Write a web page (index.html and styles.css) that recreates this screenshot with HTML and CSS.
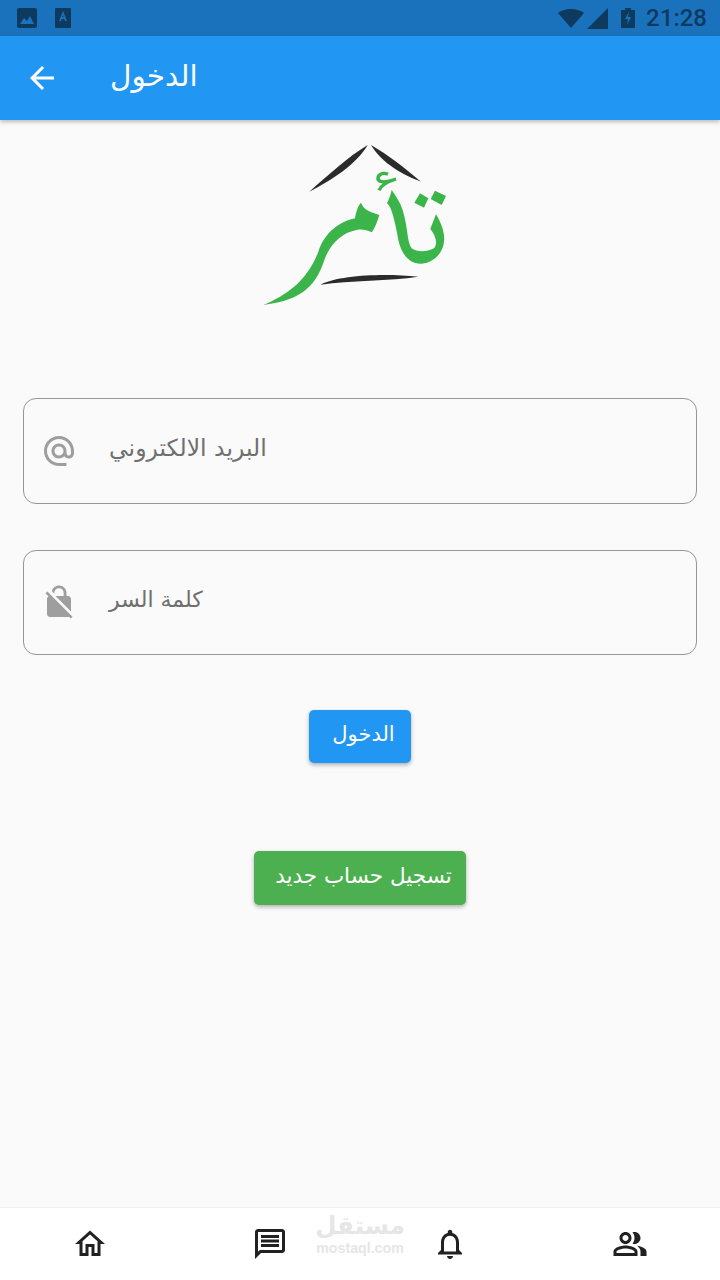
FILE: index.html
```html
<!DOCTYPE html>
<html lang="ar">

<head>
    <meta charset="UTF-8">
    <meta name="viewport" content="width=device-width, initial-scale=1.0">
    <title>الدخول</title>
    <link rel="stylesheet" href="styles.css">
</head>

<body>
    <div class="status-bar">
        <div class="status-left">
            <svg class="status-pic" viewBox="0 0 20 20">
                <rect width="20" height="20" rx="2" fill="#0f3a5f" />
                <path d="M3 16l4-6 3 3 3-5 4 8z" fill="#1a72bd" />
            </svg>
            <svg class="status-app" viewBox="0 0 16 20">
                <rect width="16" height="20" rx="1" fill="#0f3a5f" />
                <path d="M4 13L8 3l4 10h-2l-.7-2H6.700L6 13zM7.300 9h1.400L8 7z" fill="#1a72bd" />
            </svg>
        </div>
        <div class="status-right">
            <svg class="status-wifi" viewBox="0 0 26 19">
                <path d="M13 19L0 4c7-5.300 19-5.300 26 0z" fill="#0f3a5f" />
            </svg>
            <svg class="status-signal" viewBox="0 0 21 21">
                <path d="M0 21L21 0v21z" fill="#0f3a5f" />
            </svg>
            <svg class="status-battery" viewBox="0 0 14 20">
                <path d="M4 0h6v2h4v18H0V2h4z" fill="#0f3a5f" />
                <path d="M8 4L4 11h3l-1 6 4-8H7z" fill="#1a72bd" />
            </svg>
            <span class="status-time">21:28</span>
        </div>
    </div>

    <header class="app-bar">
        <svg class="back-icon" viewBox="0 0 24 24">
            <path d="M20 11H7.830l5.590-5.590L12 4l-8 8 8 8 1.410-1.410L7.830 13H20v-2z" />
        </svg>
        <h1 class="app-title" dir="rtl">الدخول</h1>
    </header>

    <main class="content">
        <svg class="logo" viewBox="0 0 630 540">
            <path class="logo-dark" d="M353 30C295 65 235 120 178 170C245 135 318 90 353 30Z" />
            <path class="logo-dark" d="M363 30C395 85 460 120 513 140C465 100 415 60 363 30Z" />
            <path class="logo-dark" d="M212 449C270 420 400 415 505 425C420 438 300 436 212 449Z" />
            <path class="logo-green" d="M40 510C110 480 170 440 205 350C225 290 270 260 315 250C318 230 325 210 333 203C340 225 365 232 388 240C382 260 375 280 365 292C350 285 335 282 320 285C280 292 245 320 225 370C200 445 165 495 40 510Z" />
            <path class="logo-green" d="M425 165C422 180 416 195 411 205C425 215 435 260 445 315C455 360 480 388 515 386C560 382 590 340 581 295C577 270 565 250 558 238C552 255 545 270 541 282C556 300 565 325 552 340C530 352 500 352 485 340C470 320 475 280 458 225C450 200 435 180 425 165Z" />
            <path class="logo-green" d="M510 175L535 190L522 218L493 203Z" />
            <path class="logo-green" d="M555 167L588 183L575 210L542 192Z" />
            <path class="logo-hamza" d="M414 118C397 110 382 120 384 133C390 144 410 142 438 132C412 140 394 150 387 166" />
        </svg>

        <div class="field field-email">
            <svg class="field-icon" viewBox="0 0 24 24">
                <path d="M12 2C6.480 2 2 6.480 2 12s4.480 10 10 10h5v-2h-5c-4.340 0-8-3.660-8-8s3.660-8 8-8 8 3.660 8 8v1.430c0 .79-.71 1.570-1.500 1.570s-1.500-.78-1.500-1.570V12c0-2.760-2.240-5-5-5s-5 2.240-5 5 2.240 5 5 5c1.380 0 2.640-.56 3.540-1.470.65.89 1.770 1.470 2.960 1.470 1.970 0 3.500-1.600 3.500-3.570V12c0-5.520-4.480-10-10-10zm0 13c-1.660 0-3-1.340-3-3s1.340-3 3-3 3 1.340 3 3-1.340 3-3 3z" />
            </svg>
            <span class="field-label" dir="rtl">البريد الالكتروني</span>
        </div>

        <div class="field">
            <svg class="field-icon" viewBox="0 0 24 24">
                <path d="M21 21.780L4.220 5 3 6.220l2.040 2.040C4.420 8.600 4 9.250 4 10v10c0 1.100.9 2 2 2h12c.23 0 .45-.05.66-.13L19.780 23 21 21.780zM8.900 6c0-1.710 1.390-3.100 3.100-3.100s3.100 1.390 3.100 3.100v2H9.660L20 18.340V10c0-1.100-.9-2-2-2h-1V6c0-2.760-2.240-5-5-5-2.320 0-4.260 1.590-4.820 3.740L8.900 6.460V6z" />
            </svg>
            <span class="field-label field-label-short" dir="rtl">كلمة السر</span>
        </div>

        <button class="btn btn-login" dir="rtl">الدخول</button>
        <button class="btn btn-register" dir="rtl">تسجيل حساب جديد</button>
    </main>

    <nav class="bottom-nav">
        <svg class="nav-icon" viewBox="0 0 24 24">
            <path d="M12 5.690l5 4.500V18h-2v-6H9v6H7v-7.810l5-4.500M12 3L2 12h3v8h6v-6h2v6h6v-8h3L12 3z" />
        </svg>
        <svg class="nav-icon" viewBox="0 0 24 24">
            <path d="M20 2H4c-1.100 0-2 .9-2 2v18l4-4h14c1.100 0 2-.9 2-2V4c0-1.100-.9-2-2-2zm0 14H5.200L4 17.200V4h16v12zM6 12h12v2H6zm0-3h12v2H6zm0-3h12v2H6z" />
        </svg>
        <svg class="nav-icon" viewBox="0 0 24 24">
            <path d="M12 22c1.100 0 2-.9 2-2h-4c0 1.100.9 2 2 2zm6-6v-5c0-3.070-1.630-5.640-4.500-6.320V4c0-.83-.67-1.500-1.500-1.500s-1.500.67-1.500 1.500v.68C7.640 5.360 6 7.920 6 11v5l-2 2v1h16v-1l-2-2zm-2 1H8v-6c0-2.480 1.510-4.500 4-4.500s4 2.020 4 4.500v6z" />
        </svg>
        <svg class="nav-icon" viewBox="0 0 24 24">
            <path d="M16.670 13.130C18.040 14.060 19 15.320 19 17v3h4v-3c0-2.180-3.570-3.470-6.330-3.870z" />
            <path d="M15 12c2.210 0 4-1.790 4-4s-1.790-4-4-4c-.47 0-.91.1-1.330.24C14.500 5.270 15 6.580 15 8s-.5 2.730-1.330 3.760c.42.14.86.24 1.330.24z" />
            <path d="M9 12c2.210 0 4-1.790 4-4s-1.790-4-4-4-4 1.790-4 4 1.790 4 4 4zm0-6c1.100 0 2 .9 2 2s-.9 2-2 2-2-.9-2-2 .9-2 2-2z" />
            <path d="M9 13c-2.670 0-8 1.340-8 4v3h16v-3c0-2.660-5.330-4-8-4zm6 5H3v-.99C3.200 16.290 6.300 15 9 15s5.800 1.290 6 2v1z" />
        </svg>
        <div class="watermark">
            <span class="watermark-ar" dir="rtl">مستقل</span>
            <span class="watermark-en">mostaql.com</span>
        </div>
    </nav>
</body>

</html>
```

FILE: styles.css
```css
* {
    padding: 0;
    margin: 0;
    box-sizing: border-box;
}

body {
    width: 720px;
    height: 1280px;
    display: flex;
    flex-direction: column;
    overflow: hidden;
    background-color: #fafafa;
    font-family: "DejaVu Sans", "Noto Sans", sans-serif;
}

/* status bar */
.status-bar {
    height: 36px;
    flex: none;
    display: flex;
    align-items: center;
    justify-content: space-between;
    padding: 0 13px 0 17px;
    background-color: #1a72bd;
}

.status-left,
.status-right {
    display: flex;
    align-items: center;
}

.status-pic {
    width: 20px;
    height: 20px;
    margin-right: 18px;
}

.status-app {
    width: 16px;
    height: 20px;
}

.status-wifi {
    width: 26px;
    height: 19px;
    margin-right: 3px;
}

.status-signal {
    width: 21px;
    height: 21px;
    margin-right: 13px;
}

.status-battery {
    width: 14px;
    height: 20px;
    margin-right: 11px;
}

.status-time {
    font-family: Roboto, sans-serif;
    font-size: 24px;
    font-weight: 500;
    color: #0f3a5f;
}

/* app bar */
.app-bar {
    height: 84px;
    flex: none;
    display: flex;
    align-items: center;
    padding-left: 24px;
    background-color: #2196f3;
    box-shadow: 0 2px 4px rgba(0, 0, 0, 0.25);
    position: relative;
}

.back-icon {
    width: 36px;
    height: 36px;
    fill: #fff;
    margin-right: 50px;
}

.app-title {
    font-size: 29.500px;
    font-weight: 400;
    color: #fff;
    padding-bottom: 5px;
}

/* form */
.content {
    flex: 1;
    display: flex;
    flex-direction: column;
    align-items: center;
    padding: 15px 23px 0;
}

.logo {
    width: 210px;
    height: 180px;
    margin: 0 10px 83px 0;
}

.logo-dark {
    fill: #2b2b2b;
}

.logo-green {
    fill: #3bb54a;
}

.logo-hamza {
    fill: none;
    stroke: #3bb54a;
    stroke-width: 10;
}

.field {
    width: 100%;
    height: 105.500px;
    display: flex;
    align-items: center;
    gap: 32px;
    padding-left: 17px;
    border: 1px solid #969696;
    border-radius: 13px;
}

.field-email {
    margin-bottom: 46px;
}

.field-icon {
    width: 36px;
    height: 36px;
    fill: #9e9e9e;
}

.field-label {
    font-size: 23.500px;
    color: #6f6f6f;
    padding-bottom: 6px;
}

.field-label-short {
    font-size: 22px;
}

.btn {
    border: 0;
    border-radius: 5px;
    color: #fff;
    font-family: inherit;
    box-shadow: 0 2px 4px rgba(0, 0, 0, 0.3);
    padding: 0 0 5px 7px;
}

.btn-login {
    width: 102px;
    height: 53px;
    margin-top: 55px;
    font-size: 21px;
    background-color: #2196f3;
}

.btn-register {
    width: 212px;
    height: 54px;
    margin-top: 88px;
    font-size: 21.500px;
    background-color: #4caf50;
}

/* bottom navigation */
.bottom-nav {
    height: 73px;
    flex: none;
    display: flex;
    align-items: center;
    justify-content: space-between;
    padding: 0 72px;
    background-color: #fff;
    border-top: 1px solid #eee;
    position: relative;
}

.nav-icon {
    width: 36px;
    height: 36px;
    fill: #212121;
}

.watermark {
    position: absolute;
    left: 316px;
    top: 2px;
    width: 88px;
    display: flex;
    flex-direction: column;
    align-items: center;
    color: #e6e6e6;
}

.watermark-ar {
    font-size: 24.500px;
    font-weight: 700;
    line-height: 32px;
}

.watermark-en {
    font-family: "Liberation Sans", sans-serif;
    font-size: 14.200px;
    font-weight: 700;
    line-height: 13px;
}
```
